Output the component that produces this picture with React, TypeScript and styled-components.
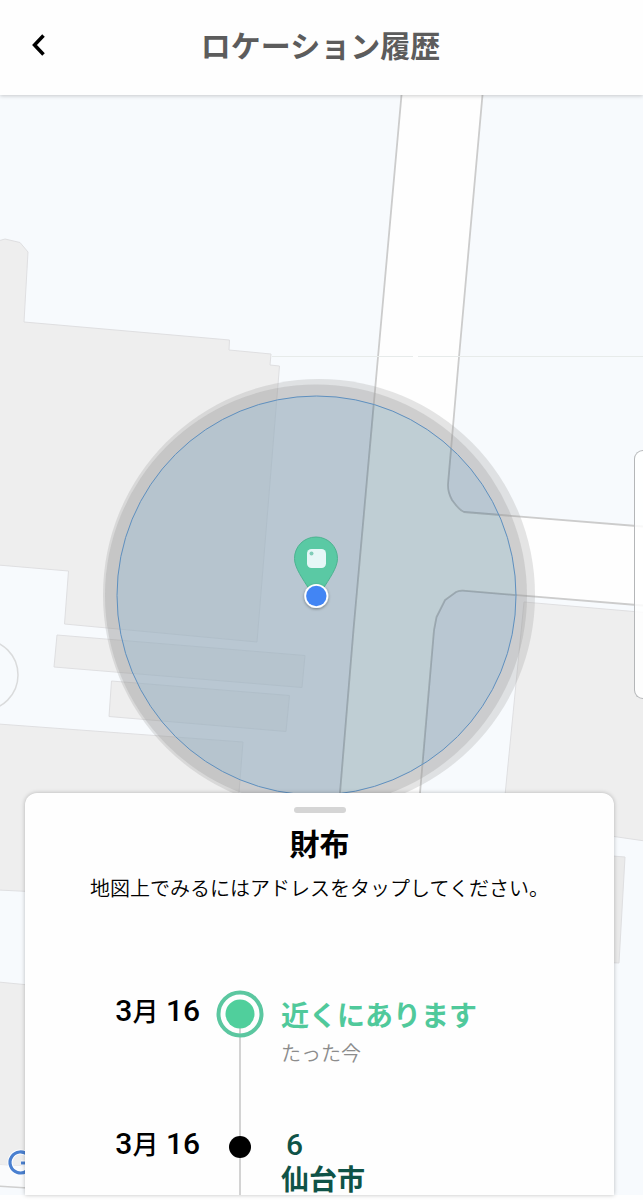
import React from "react";
import styled, { createGlobalStyle } from "styled-components";

const GlobalStyle = createGlobalStyle`
  *, *::before, *::after { box-sizing: border-box; }
  body {
    margin: 0;
    background: #fefefe;
    color: #000;
    font-family: Roboto, "Noto Sans CJK JP", sans-serif;
  }
`;

const Screen = styled.div`
  display: flex;
  flex-direction: column;
  min-height: 100vh;
  padding-bottom: 5px;
`;

const Header = styled.header`
  position: relative;
  z-index: 2;
  display: grid;
  grid-template-columns: 76px 1fr 78px;
  align-items: center;
  height: 95px;
  padding-bottom: 5px;
  background: #fefefe;
  box-shadow: 0 1px 4px rgba(0, 0, 0, 0.2);
`;

const BackButton = styled.button`
  display: grid;
  place-items: center;
  height: 60px;
  padding: 0;
  border: 0;
  background: none;
`;

const Title = styled.h1`
  margin: 4px 0 0;
  color: #5c5c5c;
  font-size: 30px;
  line-height: 44px;
  font-weight: 700;
  text-align: center;
`;

const Main = styled.main`
  position: relative;
  display: flex;
  flex: 1;
  background: #f7fafd;
`;

const MapCanvas = styled.svg`
  position: absolute;
  inset: 0;
  width: 100%;
  height: 100%;
`;

const EdgePanel = styled.div`
  position: absolute;
  top: 355px;
  right: 0;
  width: 9px;
  height: 249px;
  border: 1px solid #b4b6b8;
  border-right: 0;
  border-radius: 9px 0 0 9px;
  background: rgba(255, 255, 255, 0.85);
`;

const Sheet = styled.section`
  position: relative;
  display: flex;
  flex: 1;
  flex-direction: column;
  margin: 698px 29px 0 25px;
  padding-top: 14px;
  border-radius: 12px 12px 0 0;
  background: #fefefe;
  box-shadow: 0 0 4px rgba(0, 0, 0, 0.25);
`;

const Handle = styled.div`
  align-self: center;
  width: 52px;
  height: 6px;
  border-radius: 3px;
  background: #d5d5d5;
`;

const ItemName = styled.h2`
  margin: 10px 0 8px;
  font-size: 30px;
  line-height: 44px;
  font-weight: 700;
  text-align: center;
`;

const Hint = styled.p`
  margin: 0 0 87px;
  font-size: 20px;
  line-height: 28px;
  font-weight: 350;
  text-align: center;
`;

const Timeline = styled.ol`
  margin: 0;
  padding: 0;
  list-style: none;
`;

const Entry = styled.li<{ $last?: boolean }>`
  display: grid;
  grid-template-columns: 175px 80px 1fr;
  min-height: ${(p) => (p.$last ? 72 : 133)}px;
`;

const EntryDate = styled.time`
  font-size: 30px;
  line-height: 42px;
  font-weight: 500;
  text-align: right;
`;

const Unit = styled.span`
  font-size: 26px;
`;

const Track = styled.div`
  display: flex;
  flex-direction: column;
  align-items: center;

  &::after {
    content: "";
    flex: 1;
    width: 2px;
    background: #d3d3d3;
  }
`;

const Details = styled.div`
  display: flex;
  flex-direction: column;
  align-items: flex-start;
  padding-left: 1px;
`;

const Status = styled.strong`
  color: #50c99b;
  font-size: 28px;
  line-height: 54px;
  font-weight: 700;
`;

const Note = styled.span`
  color: #8c8c8c;
  font-size: 20px;
  line-height: 20px;
  font-weight: 350;
`;

const Address = styled.button`
  display: flex;
  flex-direction: column;
  align-items: flex-start;
  padding: 0;
  border: 0;
  background: none;
  color: #0f5347;
  font-family: inherit;
  text-align: left;
`;

const Block = styled.span`
  padding-left: 5px;
  font-size: 30px;
  line-height: 44px;
  font-weight: 500;
`;

const City = styled.span`
  font-size: 28px;
  line-height: 28px;
  font-weight: 700;
`;

function Roads({ fill, stroke }: { fill: string; stroke: string }) {
  return (
    <>
      <path
        d="M401.500 95L378 357L353.500 630L340 793L338 820H418L420 793L434 630L436.500 617L445 600L456 592L463 590.500L643 605.500V526.500L464 512L452 501L448.500 493L448 484L459 357L482.500 95Z"
        fill={fill}
      />
      <g fill="none" stroke={stroke} strokeWidth="1.800">
        <path d="M401.500 95L378 357L353.500 630L340 793L338 820" />
        <path d="M482.500 95L459 357L448 484Q447.500 492 452 500Q459 510 464 512L643 526.500" />
        <path d="M418 820L420 793L434 630L436.500 617L445 600L456 592Q460 590.500 463 590.700L643 605.500" />
      </g>
    </>
  );
}

function LocationMap() {
  return (
    <MapCanvas viewBox="0 95 643 1100" preserveAspectRatio="xMidYMin slice" role="img" aria-label="地図">
      <defs>
        <filter id="dotShadow" x="-50%" y="-50%" width="200%" height="200%">
          <feDropShadow dx="0" dy="1" stdDeviation="1.5" floodOpacity="0.4" />
        </filter>
        <clipPath id="accuracyClip">
          <circle cx="316.500" cy="595.500" r="199" />
        </clipPath>
      </defs>

      {/* buildings */}
      <g fill="#eeeeee" stroke="#dfdfe1" strokeWidth="1">
        <path d="M-2 241L5 239L20 242.500L28 252L24 322L229.500 340L229 350L271 354L270 365L279.500 366L257 642L64.500 624L68.500 571L-2 565Z" />
        <path d="M57 635L305 655.500L302 687.500L54 667Z" />
        <path d="M111.500 681L289.500 695.500L286 731.500L109 716.500Z" />
        <path d="M-2 724L243 742L236 830L60 893L-2 890Z" />
        <path d="M524 602L645 612.500V841L614 836.500L502 826Z" />
        <path d="M600 855L625 857L619 963L600 962Z" fill="#eaeaea" />
        <path d="M-2 982L60 988V1168L-2 1165Z" />
      </g>
      <circle cx="-17.500" cy="675" r="35.500" fill="none" stroke="#dadbdc" strokeWidth="1.500" />
      <path d="M-2 1165L60 1168V1190L-2 1186Z" fill="#fafbfc" />
      <path d="M-2 1186L60 1190" stroke="#cfcfcf" strokeWidth="1.500" />

      <Roads fill="#fefefe" stroke="#cccccc" />
      <path d="M272 356.500H413M418 356.500H645" stroke="#e7ebea" strokeWidth="1" />

      {/* accuracy area */}
      <circle cx="319" cy="595" r="216" fill="#979797" fillOpacity="0.250" />
      <circle cx="316" cy="595.500" r="211" fill="#979797" fillOpacity="0.280" />
      <circle cx="316.500" cy="595.500" r="199.500" fill="#9dc0da" fillOpacity="0.400" />
      <g clipPath="url(#accuracyClip)">
        <Roads fill="rgba(215, 228, 218, 0.2)" stroke="rgba(110, 120, 125, 0.3)" />
      </g>
      <circle cx="316.500" cy="595.500" r="199.500" fill="none" stroke="#5f90bf" strokeWidth="1" />

      {/* item pin */}
      <path
        d="M316 537C328 537 337.500 546.500 337.500 558.500C337.500 568 329 579 323 589L316 599L309 589C303 579 294.500 568 294.500 558.500C294.500 546.500 304 537 316 537Z"
        fill="#5ac9a4"
        stroke="#4db391"
        strokeWidth="1"
      />
      <rect x="307" y="549" width="19" height="19" rx="4.500" fill="#e6f7f7" />
      <circle cx="311.500" cy="553.500" r="2" fill="#7fcdb8" />

      {/* current position */}
      <circle cx="316.300" cy="596" r="12" fill="#fff" filter="url(#dotShadow)" />
      <circle cx="316.300" cy="596" r="10.200" fill="#4285f4" />

      {/* map provider logo */}
      <g fill="none">
        <path d="M28.200 1155.300A10.500 10.500 0 1 0 31 1163H21" stroke="#fff" strokeWidth="5" />
        <path d="M28.200 1155.300A10.500 10.500 0 1 0 31 1163H21" stroke="#4a80d0" strokeWidth="3.200" />
      </g>
    </MapCanvas>
  );
}

function CurrentMarker() {
  return (
    <svg width="48" height="48" viewBox="0 0 48 48" aria-hidden="true">
      <path d="M24 24V48" stroke="#d3d3d3" strokeWidth="2" />
      <circle cx="24" cy="24" r="21.500" fill="none" stroke="#5bc7a0" strokeWidth="4" />
      <circle cx="24" cy="24" r="14.500" fill="#50cf9c" />
    </svg>
  );
}

function PastMarker() {
  return (
    <svg width="48" height="48" viewBox="0 0 48 48" aria-hidden="true">
      <path d="M24 0V48" stroke="#d3d3d3" strokeWidth="2" />
      <circle cx="24" cy="24" r="11" fill="#000" />
    </svg>
  );
}

export default function App() {
  return (
    <Screen>
      <GlobalStyle />
      <Header>
        <BackButton type="button" aria-label="戻る">
          <svg width="20" height="24" viewBox="0 0 20 24" aria-hidden="true">
            <path d="M15.500 2.500L6.500 12L15.500 21.500" fill="none" stroke="#000" strokeWidth="3.500" />
          </svg>
        </BackButton>
        <Title>ロケーション履歴</Title>
      </Header>
      <Main>
        <LocationMap />
        <EdgePanel />
        <Sheet>
          <Handle />
          <ItemName>財布</ItemName>
          <Hint>地図上でみるにはアドレスをタップしてください。</Hint>
          <Timeline>
            <Entry>
              <EntryDate dateTime="03-16">
                3<Unit>月</Unit> 16
              </EntryDate>
              <Track>
                <CurrentMarker />
              </Track>
              <Details>
                <Status>近くにあります</Status>
                <Note>たった今</Note>
              </Details>
            </Entry>
            <Entry $last>
              <EntryDate dateTime="03-16">
                3<Unit>月</Unit> 16
              </EntryDate>
              <Track>
                <PastMarker />
              </Track>
              <Details>
                <Address type="button">
                  <Block>6</Block>
                  <City>仙台市</City>
                </Address>
              </Details>
            </Entry>
          </Timeline>
        </Sheet>
      </Main>
    </Screen>
  );
}
